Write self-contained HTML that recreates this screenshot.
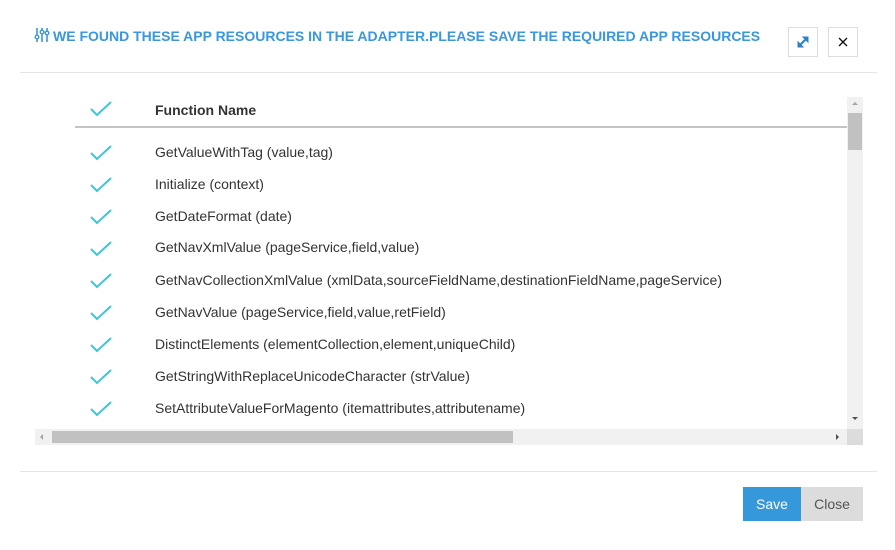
<!DOCTYPE html>
<html><head><meta charset="utf-8"><style>
*{margin:0;padding:0;box-sizing:border-box}
body{width:895px;height:550px;background:#fff;font-family:"Liberation Sans",Arial,sans-serif;position:relative;overflow:hidden;color:#333}
.title{position:absolute;left:34px;top:28px;font-size:14px;font-weight:bold;color:#3a97dc;white-space:nowrap}
.btn{position:absolute;top:27px;width:30px;height:30px;border:1px solid #ddd;background:#fff}
.sep{position:absolute;left:20px;width:857px;height:1px;background:#e5e5e5}
.hdr{position:absolute;left:155px;top:102px;font-size:14px;font-weight:bold;color:#333}
.hline{position:absolute;left:75px;top:126px;width:772px;height:2px;background:#c4c4c4}
.row{position:absolute;left:155px;font-size:14px;color:#333;white-space:nowrap}
.chk{position:absolute;left:90px;width:22px;height:16px}
.vs{position:absolute;left:847px;top:97px;width:16px;height:332px;background:#f1f1f1}
.hs{position:absolute;left:35px;top:429px;width:812px;height:16px;background:#f1f1f1}
.corner{position:absolute;left:847px;top:429px;width:16px;height:16px;background:#dcdcdc}
.b2{position:absolute;top:487px;height:34px;font-size:14px;line-height:34px;text-align:center}
</style></head><body>
<div class="title"><svg width="16" height="14" viewBox="0 0 16 14" style="vertical-align:-1px;margin-right:3px"><g stroke="#3a97dc" stroke-width="1.6" fill="none"><line x1="3" y1="0" x2="3" y2="14"/><line x1="8" y1="0" x2="8" y2="14"/><line x1="13" y1="0" x2="13" y2="14"/></g><g fill="#fff" stroke="#3a97dc" stroke-width="1.4"><circle cx="3" cy="9" r="1.8"/><circle cx="8" cy="4" r="1.8"/><circle cx="13" cy="5" r="1.8"/></g></svg>WE FOUND THESE APP RESOURCES IN THE ADAPTER.PLEASE SAVE THE REQUIRED APP RESOURCES</div>
<div class="btn" style="left:788px"><svg width="28" height="28" viewBox="0 0 28 28"><g stroke="#2f7fc8" stroke-width="2" fill="#2f7fc8"><line x1="10" y1="18" x2="18" y2="10"/><polygon points="14,9 19,9 19,14" stroke-width="1"/><polygon points="9,14 9,19 14,19" stroke-width="1"/></g></svg></div>
<div class="btn" style="left:828px"><svg width="28" height="28" viewBox="0 0 28 28"><g stroke="#111" stroke-width="1.3"><line x1="10" y1="10" x2="18" y2="18"/><line x1="18" y1="10" x2="10" y2="18"/></g></svg></div>
<div class="sep" style="top:72px"></div>
<svg class="chk" style="top:101px" viewBox="0 0 22 16"><polyline points="1,8 7,14 21,1" stroke="#3ec6d8" stroke-width="2" fill="none"/></svg>
<div class="hdr">Function Name</div>
<div class="hline"></div>

<svg class="chk" style="top:145px" viewBox="0 0 22 16"><polyline points="1,8 7,14 21,1" stroke="#3ec6d8" stroke-width="2" fill="none"/></svg><div class="row" style="top:144px">GetValueWithTag (value,tag)</div>
<svg class="chk" style="top:177px" viewBox="0 0 22 16"><polyline points="1,8 7,14 21,1" stroke="#3ec6d8" stroke-width="2" fill="none"/></svg><div class="row" style="top:176px">Initialize (context)</div>
<svg class="chk" style="top:209px" viewBox="0 0 22 16"><polyline points="1,8 7,14 21,1" stroke="#3ec6d8" stroke-width="2" fill="none"/></svg><div class="row" style="top:208px">GetDateFormat (date)</div>
<svg class="chk" style="top:241px" viewBox="0 0 22 16"><polyline points="1,8 7,14 21,1" stroke="#3ec6d8" stroke-width="2" fill="none"/></svg><div class="row" style="top:239px">GetNavXmlValue (pageService,field,value)</div>
<svg class="chk" style="top:273px" viewBox="0 0 22 16"><polyline points="1,8 7,14 21,1" stroke="#3ec6d8" stroke-width="2" fill="none"/></svg><div class="row" style="top:272px">GetNavCollectionXmlValue (xmlData,sourceFieldName,destinationFieldName,pageService)</div>
<svg class="chk" style="top:305px" viewBox="0 0 22 16"><polyline points="1,8 7,14 21,1" stroke="#3ec6d8" stroke-width="2" fill="none"/></svg><div class="row" style="top:304px">GetNavValue (pageService,field,value,retField)</div>
<svg class="chk" style="top:337px" viewBox="0 0 22 16"><polyline points="1,8 7,14 21,1" stroke="#3ec6d8" stroke-width="2" fill="none"/></svg><div class="row" style="top:336px">DistinctElements (elementCollection,element,uniqueChild)</div>
<svg class="chk" style="top:369px" viewBox="0 0 22 16"><polyline points="1,8 7,14 21,1" stroke="#3ec6d8" stroke-width="2" fill="none"/></svg><div class="row" style="top:368px">GetStringWithReplaceUnicodeCharacter (strValue)</div>
<svg class="chk" style="top:401px" viewBox="0 0 22 16"><polyline points="1,8 7,14 21,1" stroke="#3ec6d8" stroke-width="2" fill="none"/></svg><div class="row" style="top:400px">SetAttributeValueForMagento (itemattributes,attributename)</div>

<div class="vs"><div style="position:absolute;left:1px;top:16px;width:14px;height:37px;background:#c1c1c1"></div>
<div style="position:absolute;left:5px;top:5px;border:3px solid transparent;border-bottom:3px solid #a3a3a3;border-top:0"></div>
<div style="position:absolute;left:5px;top:320px;border:3px solid transparent;border-top:3px solid #505050;border-bottom:0"></div></div>
<div class="hs"><div style="position:absolute;left:17px;top:2px;width:461px;height:12px;background:#c1c1c1"></div>
<div style="position:absolute;left:5px;top:5px;border:3px solid transparent;border-right:3px solid #a3a3a3;border-left:0"></div>
<div style="position:absolute;left:801px;top:5px;border:3px solid transparent;border-left:3px solid #505050;border-right:0"></div></div>
<div class="corner"></div>
<div class="sep" style="top:471px"></div>
<div class="b2" style="left:743px;width:58px;background:#3498db;color:#fff">Save</div>
<div class="b2" style="left:801px;width:62px;background:#dcdcdc;color:#555">Close</div>
</body></html>
